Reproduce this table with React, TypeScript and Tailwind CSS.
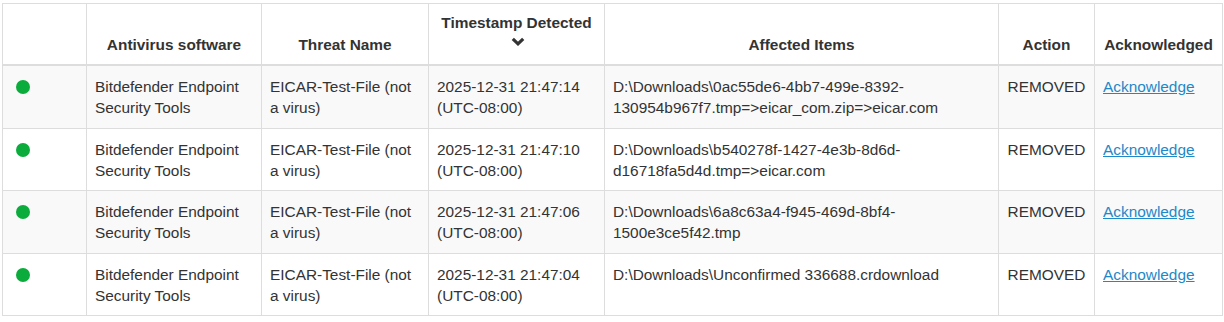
import React from "react";

const rows = [
  {
    ts: "2025-12-31 21:47:14",
    items: ["D:\\Downloads\\0ac55de6-4bb7-499e-8392-", "130954b967f7.tmp=>eicar_com.zip=>eicar.com"],
  },
  {
    ts: "2025-12-31 21:47:10",
    items: ["D:\\Downloads\\b540278f-1427-4e3b-8d6d-", "d16718fa5d4d.tmp=>eicar.com"],
  },
  {
    ts: "2025-12-31 21:47:06",
    items: ["D:\\Downloads\\6a8c63a4-f945-469d-8bf4-", "1500e3ce5f42.tmp"],
  },
  {
    ts: "2025-12-31 21:47:04",
    items: ["D:\\Downloads\\Unconfirmed 336688.crdownload"],
  },
];

export default function App() {
  return (
    <div
      className="w-[1224px] h-[322px] bg-white pl-[2px] pt-[3px] text-[15.4px] leading-[21px] text-[#333]"
      style={{ fontFamily: '"Liberation Sans", Arial, sans-serif' }}
    >
      <table className="table-fixed border-collapse w-[1220px]">
        <colgroup>
          <col className="w-[84px]" />
          <col className="w-[175px]" />
          <col className="w-[167px]" />
          <col className="w-[176px]" />
          <col className="w-[394px]" />
          <col className="w-[96px]" />
          <col className="w-[128px]" />
        </colgroup>
        <thead>
          <tr>
            <th className="border border-[#ddd] border-b-2 px-[8px] py-[9px] align-bottom font-bold text-center"></th>
            <th className="border border-[#ddd] border-b-2 px-[8px] py-[9px] align-bottom font-bold text-center">Antivirus software</th>
            <th className="border border-[#ddd] border-b-2 px-[8px] py-[9px] align-bottom font-bold text-center">Threat Name</th>
            <th className="border border-[#ddd] border-b-2 px-[8px] pt-[8px] pb-[9px] align-bottom font-bold text-center">
              <div>Timestamp Detected</div>
              <div className="flex justify-center h-[22px] pt-[4px]">
                <svg width="14" height="9" viewBox="0 0 14 9" className="ml-[2px] block">
                  <polyline points="1.8,1.8 7,6.8 12.2,1.8" fill="none" stroke="#333" strokeWidth="3.2" />
                </svg>
              </div>
            </th>
            <th className="border border-[#ddd] border-b-2 px-[8px] py-[9px] align-bottom font-bold text-center">Affected Items</th>
            <th className="border border-[#ddd] border-b-2 px-[8px] py-[9px] align-bottom font-bold text-center">Action</th>
            <th className="border border-[#ddd] border-b-2 px-[8px] py-[9px] align-bottom font-bold text-center">Acknowledged</th>
          </tr>
        </thead>
        <tbody>
          {rows.map((r, i) => (
            <tr key={i} className={i % 2 === 0 ? "bg-[#f9f9f9]" : "bg-white"}>
              <td className="border border-[#ddd] pl-[13px] pr-[8px] pt-[10px] pb-[9.5px] align-top">
                <div className="h-[21px] pt-[4px]">
                  <div className="w-[14px] h-[14px] rounded-full bg-[#0bac3c]"></div>
                </div>
              </td>
              <td className="border border-[#ddd] px-[8px] pt-[10px] pb-[9.5px] align-top">
                Bitdefender Endpoint Security Tools
              </td>
              <td className="border border-[#ddd] px-[8px] pt-[10px] pb-[9.5px] align-top">
                EICAR-Test-File (not a virus)
              </td>
              <td className="border border-[#ddd] px-[8px] pt-[10px] pb-[9.5px] align-top">
                <div>{r.ts}</div>
                <div>(UTC-08:00)</div>
              </td>
              <td className="border border-[#ddd] px-[8px] pt-[10px] pb-[9.5px] align-top">
                {r.items.map((t, j) => (
                  <div key={j}>{t}</div>
                ))}
              </td>
              <td className="border border-[#ddd] px-[8px] pt-[10px] pb-[9.5px] align-top text-center">REMOVED</td>
              <td className="border border-[#ddd] px-[8px] pt-[10px] pb-[9.5px] align-top">
                <a href="#" className="text-[#1e88c8] underline">Acknowledge</a>
              </td>
            </tr>
          ))}
        </tbody>
      </table>
    </div>
  );
}
